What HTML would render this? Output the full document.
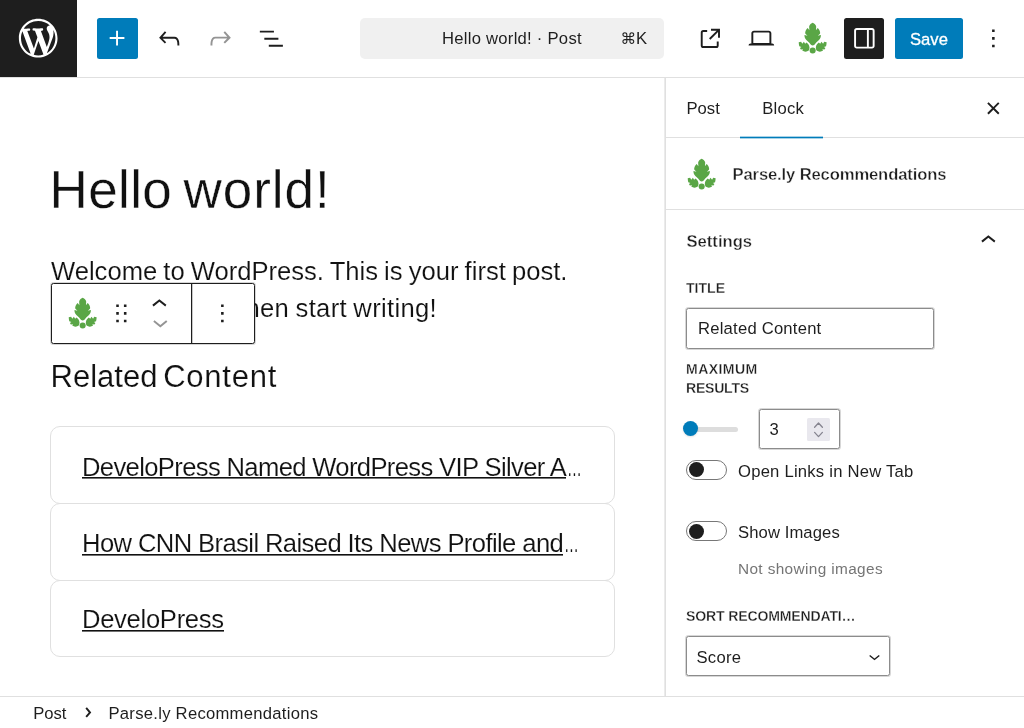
<!DOCTYPE html>
<html lang="en">
<head>
<meta charset="utf-8">
<title>Edit Post “Hello world!” ‹ WordPress</title>
<style>
*{box-sizing:border-box;margin:0;padding:0}
html,body{width:1024px;height:728px;overflow:hidden;background:#fff}
body{will-change:transform;font-family:"Liberation Sans",sans-serif;font-size:16.64px;color:#1e1e1e;position:relative}
.abs{position:absolute}
svg{display:block}
.ico{position:absolute;width:30.72px;height:30.72px;fill:#1e1e1e}
.leaf{width:38px;height:40px}
.t{position:absolute;white-space:nowrap;line-height:1}
/* header */
#hdr{left:0;top:0;width:1024px;height:78px;background:#fff;border-bottom:1px solid #e0e0e0}
#wp{left:0;top:0;width:77px;height:77px;background:#1e1e1e}
#ins{left:97px;top:18px;width:41px;height:41px;background:#007cba;border-radius:2.5px}
#doc{left:360px;top:18px;width:303.5px;height:41px;background:#f0f0f0;border-radius:5px}
#tog{left:843.7px;top:18px;width:40.6px;height:41px;background:#1e1e1e;border-radius:2.5px}
#save{left:895px;top:18px;width:67.5px;height:41px;background:#007cba;border-radius:2.5px}
/* canvas */
.c{font-family:"Liberation Sans",sans-serif;color:#111;-webkit-text-stroke:0.13px #fff}
#title{-webkit-text-stroke:0.35px #fff}
#h3{-webkit-text-stroke:0.15px #fff}
.el{display:inline-block;transform:scaleX(0.58);transform-origin:0 50%;margin-left:1px}
.c u{text-decoration:none;background:linear-gradient(#111,#111) 0 calc(100% - 2.5px)/100% 1.6px no-repeat}
#l2 u{background-position:0 calc(100% - 1.75px)}
#l3 u{background-position:0 calc(100% - 1.4px)}
/* sidebar */
#sb{left:664px;top:78px;width:360px;height:619px;background:linear-gradient(90deg,#ebebeb 0 1px,#e0e0e0 1px 2px,#fff 2px)}
.hl{position:absolute;height:1px;background:#e0e0e0}
.lab{font-size:14.08px;font-weight:bold;letter-spacing:0;color:#1e1e1e;-webkit-text-stroke:0.3px #fff}
.m{font-weight:bold;-webkit-text-stroke:0.35px #fff}
.inp{position:absolute;border:1px solid #8c8c8c;border-radius:2.5px;background:#fff;box-shadow:0 0 0 1px rgba(140,140,140,.35)}
.tg{position:absolute;width:41px;height:20.4px;border:1.1px solid #777;border-radius:10.2px;background:#fff}
.tg i{position:absolute;left:1.6px;top:1.6px;width:15px;height:15px;border-radius:50%;background:#1e1e1e}
/* footer */
#ft{left:0;top:696px;width:1024px;height:32px;background:#fff;border-top:1px solid #e0e0e0}
</style>
</head>
<body>

<!-- ============ HEADER ============ -->
<div id="hdr" class="abs"></div>
<div id="wp" class="abs">
  <svg class="ico" style="left:15.2px;top:15.4px;width:46.4px;height:46.4px;fill:#fff" viewBox="-2 -2 24 24"><path d="M20 10c0-5.51-4.49-10-10-10C4.48 0 0 4.49 0 10c0 5.52 4.48 10 10 10 5.51 0 10-4.48 10-10zM7.78 15.37L4.37 6.22c.55-.02 1.17-.08 1.17-.08.5-.06.44-1.13-.06-1.11 0 0-1.45.11-2.37.11-.18 0-.37 0-.58-.01C4.12 2.69 6.87 1.11 10 1.11c2.33 0 4.45.87 6.05 2.34-.68-.11-1.65.39-1.65 1.58 0 .74.45 1.36.9 2.1.35.61.55 1.36.55 2.46 0 1.49-1.4 5-1.4 5l-3.03-8.37c.54-.02.82-.17.82-.17.5-.05.44-1.25-.06-1.22 0 0-1.44.12-2.38.12-.87 0-2.33-.12-2.33-.12-.5-.03-.56 1.2-.06 1.22l.92.08 1.26 3.41zM17.41 10c.24-.64.74-1.87.43-4.25.7 1.29 1.05 2.71 1.05 4.25 0 3.29-1.73 6.24-4.4 7.78.97-2.59 1.94-5.2 2.92-7.78zM6.1 18.09C3.12 16.65 1.11 13.53 1.11 10c0-1.3.23-2.48.72-3.59C3.25 10.3 4.67 14.2 6.1 18.09zm4.03-6.63l2.58 6.98c-.86.29-1.76.45-2.71.45-.79 0-1.57-.11-2.29-.33.81-2.38 1.62-4.74 2.42-7.1z"/></svg>
</div>
<div id="ins" class="abs">
  <svg class="ico" style="left:5px;top:5px;fill:#fff" viewBox="0 0 24 24"><path d="M11 12.5V17.5H12.5V12.5H17.5V11H12.5V6H11V11H6V12.5H11Z"/></svg>
</div>
<svg class="ico" style="left:153.6px;top:23px" viewBox="0 0 24 24"><path d="M18.3 11.7c-.6-.6-1.4-.9-2.3-.9H6.7l2.9-3.3-1.1-1-4.5 5L8.5 16l1-1-2.7-2.7H16c.5 0 .9.2 1.3.5 1 1 1 3.4 1 4.5v.3h1.5v-.2c0-1.5 0-4.3-1.5-5.7z"/></svg>
<svg class="ico" style="left:204.8px;top:23px;fill:#949494" viewBox="0 0 24 24"><path d="M15.6 6.5l-1.1 1 2.9 3.3H8c-.9 0-1.7.3-2.3.9-1.4 1.5-1.4 4.2-1.4 5.6v.2h1.5v-.3c0-1.1 0-3.5 1-4.5.3-.3.7-.5 1.3-.5h9.2L14.5 15l1.1 1.1 4.6-4.6-4.6-5z"/></svg>
<svg class="ico" style="left:256px;top:23px" viewBox="0 0 24 24"><path d="M3 6h11v1.5H3V6Zm3.5 5.500h11V13h-11v-1.500ZM21 17H10v1.500h11V17Z"/></svg>

<div id="doc" class="abs"></div>
<div class="t" style="left:442px;top:31.1px;font-size:16.64px;letter-spacing:0.26px">Hello world! · Post</div>
<div class="t" style="left:620.5px;top:31.3px;font-size:16.64px"><span style="font-family:'DejaVu Sans',sans-serif;font-size:15.5px">⌘</span>K</div>

<svg class="ico" style="left:694.500px;top:23px" viewBox="0 0 24 24"><path d="M19.500 4.500h-7V6h4.440l-5.970 5.970 1.060 1.060L18 7.060v4.440h1.500v-7Zm-13 1a2 2 0 0 0-2 2v10a2 2 0 0 0 2 2h10a2 2 0 0 0 2-2v-3H17v3a.5.5 0 0 1-.5.5h-10a.5.5 0 0 1-.5-.5v-10a.5.5 0 0 1 .5-.5h3V5.500h-3Z"/></svg>
<svg class="ico" style="left:746px;top:23px" viewBox="0 0 24 24"><path d="M20.500 16h-.7V8c0-1.100-.9-2-2-2H6.200c-1.100 0-2 .9-2 2v8h-.7c-.8 0-1.500.7-1.500 1.500h20c0-.8-.7-1.500-1.500-1.500zM5.700 8c0-.3.200-.5.500-.5h11.600c.3 0 .5.200.5.500v7.600H5.700V8z"/></svg>
<svg class="leaf abs" style="left:794px;top:18px" viewBox="0 0 692 728"><g fill="#5aa646"><path d="M340,88C352,92 375,108 392,125C402,135 405,150 404,165L400,222L430,180C450,195 470,225 476,262C478,275 474,285 468,292L434,322L489,311C493,335 482,372 455,402L405,447L372,486Q340,512 308,486L275,447L225,402C198,372 187,335 191,311L246,322L212,292C206,285 202,275 204,262C210,225 230,195 250,180L280,222L276,165C275,150 278,135 288,125C305,108 328,92 340,88Z"/><path d="M86,440L130,432L150,468L180,432L203,470L228,446C258,466 278,498 282,532C284,560 276,585 262,598C240,615 200,618 168,602L150,592L165,570L125,572L108,545L135,530L96,512C90,490 86,465 86,440Z"/><path d="M594,440L550,432L530,468L500,432L477,470L452,446C422,466 402,498 398,532C396,560 404,585 418,598C440,615 480,618 512,602L530,592L515,570L555,572L572,545L545,530L584,512C590,490 594,465 594,440Z"/><circle cx="340" cy="590" r="55"/></g></svg>
<div id="tog" class="abs">
  <svg class="ico" style="left:5px;top:5px;fill:#fff" viewBox="0 0 24 24"><path fill-rule="evenodd" d="M18 4H6c-1.100 0-2 .9-2 2v12c0 1.100.9 2 2 2h12c1.100 0 2-.9 2-2V6c0-1.100-.9-2-2-2zm-4 14.500H6c-.3 0-.5-.2-.5-.5V6c0-.3.200-.5.500-.5h8v13zm4.500-.5c0 .3-.2.500-.5.500h-2.500v-13H18c.3 0 .5.200.5.500v12z"/></svg>
</div>
<div id="save" class="abs"></div>
<div class="t" style="left:910px;top:32px;font-size:16.64px;color:#fff;-webkit-text-stroke:0.3px #fff">Save</div>
<svg class="ico" style="left:977.500px;top:23px" viewBox="0 0 24 24"><path d="M13 19h-2v-2h2v2zm0-6h-2v-2h2v2zm0-6h-2V5h2v2z"/></svg>

<!-- ============ CANVAS ============ -->
<div class="t c" id="title" style="left:49.6px;top:163px;font-size:53px;letter-spacing:0.35px;word-spacing:-3.6px">Hello <span style="letter-spacing:0.95px">world!</span></div>
<div class="t c" id="p1" style="left:51px;top:258.7px;font-size:25.600px;word-spacing:-1px">Welcome to WordPress. This is your first post.</div>
<div class="t c" id="p2" style="left:51px;top:295.5px;font-size:25.600px;word-spacing:-1px;letter-spacing:0.32px">Edit or delete it, then start writing!</div>
<div class="t c" id="h3" style="left:50.6px;top:361.1px;font-size:31px;letter-spacing:0px;word-spacing:-2.9px">Related <span style="letter-spacing:0.75px">Content</span></div>

<div class="abs li" style="left:50px;top:426.3px;width:565.4px;height:77.7px;border:1px solid #e0e0e0;border-radius:10px"></div>
<div class="abs li" style="left:50px;top:503px;width:565.4px;height:77.7px;border:1px solid #e0e0e0;border-radius:10px"></div>
<div class="abs li" style="left:50px;top:579.7px;width:565.4px;height:77.7px;border:1px solid #e0e0e0;border-radius:10px"></div>
<div class="t c" id="l1" style="left:82px;top:455.2px;font-size:25.600px;letter-spacing:-0.64px"><u>DeveloPress Named WordPress VIP Silver A</u><span class="el">…</span></div>
<div class="t c" id="l2" style="left:82px;top:530.9px;font-size:25.600px;letter-spacing:-0.6px"><u>How CNN Brasil Raised Its News Profile and</u><span class="el">…</span></div>
<div class="t c" id="l3" style="left:82px;top:607.4px;font-size:25.600px;letter-spacing:-0.3px"><u>DeveloPress</u></div>

<!-- block toolbar -->
<div class="abs" style="left:51px;top:283px;width:204px;height:61px;background:#fff;border:1px solid #1e1e1e;border-radius:2.500px;box-shadow:0 0 0 1px rgba(30,30,30,.18)"></div>
<div class="abs" style="left:191px;top:283px;width:1px;height:61px;background:#1e1e1e;box-shadow:1px 0 0 rgba(30,30,30,.25)"></div>
<svg class="leaf abs" style="left:63.6px;top:293px" viewBox="0 0 692 728"><g fill="#5aa646"><path d="M340,88C352,92 375,108 392,125C402,135 405,150 404,165L400,222L430,180C450,195 470,225 476,262C478,275 474,285 468,292L434,322L489,311C493,335 482,372 455,402L405,447L372,486Q340,512 308,486L275,447L225,402C198,372 187,335 191,311L246,322L212,292C206,285 202,275 204,262C210,225 230,195 250,180L280,222L276,165C275,150 278,135 288,125C305,108 328,92 340,88Z"/><path d="M86,440L130,432L150,468L180,432L203,470L228,446C258,466 278,498 282,532C284,560 276,585 262,598C240,615 200,618 168,602L150,592L165,570L125,572L108,545L135,530L96,512C90,490 86,465 86,440Z"/><path d="M594,440L550,432L530,468L500,432L477,470L452,446C422,466 402,498 398,532C396,560 404,585 418,598C440,615 480,618 512,602L530,592L515,570L555,572L572,545L545,530L584,512C590,490 594,465 594,440Z"/><circle cx="340" cy="590" r="55"/></g></svg>
<svg class="ico" style="left:106px;top:298px" viewBox="0 0 24 24"><path d="M8 7h2V5H8v2zm0 6h2v-2H8v2zm0 6h2v-2H8v2zm6-14v2h2V5h-2zm0 8h2v-2h-2v2zm0 6h2v-2h-2v2z"/></svg>
<svg class="ico" style="left:144.400px;top:289px" viewBox="0 0 24 24"><path d="M6.500 12.400L12 8l5.500 4.400-.9 1.200L12 10l-4.500 3.600-1-1.200z"/></svg>
<svg class="ico" style="left:144.600px;top:307px;fill:#949494" viewBox="0 0 24 24"><path d="M17.500 11.600L12 16l-5.500-4.400.9-1.200L12 14l4.500-3.600 1 1.200z"/></svg>
<svg class="ico" style="left:207px;top:298px" viewBox="0 0 24 24"><path d="M13 19h-2v-2h2v2zm0-6h-2v-2h2v2zm0-6h-2V5h2v2z"/></svg>

<!-- ============ SIDEBAR ============ -->
<div id="sb" class="abs"></div>
<div class="t" style="left:686.5px;top:100.8px;font-size:16.64px">Post</div>
<div class="t" style="left:762.3px;top:100.8px;font-size:16.64px;letter-spacing:0.2px">Block</div>
<div class="hl" style="left:666px;top:137px;width:358px"></div>
<div class="abs" style="left:740px;top:136px;width:83px;height:3px;background:linear-gradient(rgba(0,124,186,.35) 0 1px,#007cba 1px 2px,rgba(0,124,186,.35) 2px 3px)"></div>
<svg class="ico" style="left:977.500px;top:93px" viewBox="0 0 24 24"><path d="M12 13.060l3.712 3.713 1.061-1.060L13.061 12l3.712-3.712-1.060-1.060L12 10.938 8.288 7.227l-1.061 1.060L10.939 12l-3.712 3.712 1.060 1.061L12 13.061z"/></svg>

<svg class="leaf abs" style="left:682.6px;top:153.5px" viewBox="0 0 692 728"><g fill="#5aa646"><path d="M340,88C352,92 375,108 392,125C402,135 405,150 404,165L400,222L430,180C450,195 470,225 476,262C478,275 474,285 468,292L434,322L489,311C493,335 482,372 455,402L405,447L372,486Q340,512 308,486L275,447L225,402C198,372 187,335 191,311L246,322L212,292C206,285 202,275 204,262C210,225 230,195 250,180L280,222L276,165C275,150 278,135 288,125C305,108 328,92 340,88Z"/><path d="M86,440L130,432L150,468L180,432L203,470L228,446C258,466 278,498 282,532C284,560 276,585 262,598C240,615 200,618 168,602L150,592L165,570L125,572L108,545L135,530L96,512C90,490 86,465 86,440Z"/><path d="M594,440L550,432L530,468L500,432L477,470L452,446C422,466 402,498 398,532C396,560 404,585 418,598C440,615 480,618 512,602L530,592L515,570L555,572L572,545L545,530L584,512C590,490 594,465 594,440Z"/><circle cx="340" cy="590" r="55"/></g></svg>
<div class="t m" style="left:732.5px;top:167.4px;font-size:16.64px;letter-spacing:-0.14px">Parse.ly Recommendations</div>
<div class="hl" style="left:666px;top:209px;width:358px"></div>

<div class="t m" style="left:686.5px;top:234px;font-size:16.64px">Settings</div>
<svg class="ico" style="left:972.500px;top:225.2px" viewBox="0 0 24 24"><path d="M6.500 12.400L12 8l5.500 4.400-.9 1.200L12 10l-4.500 3.600-1-1.200z"/></svg>

<div class="t lab" style="left:686px;top:281px">TITLE</div>
<div class="inp" style="left:686px;top:308px;width:248.4px;height:41px"></div>
<div class="t" style="left:698px;top:321.4px;font-size:16.64px;letter-spacing:0.22px">Related Content</div>

<div class="t lab" style="left:686px;top:362px;letter-spacing:0.4px">MAXIMUM</div>
<div class="t lab" style="left:686px;top:381px;letter-spacing:-0.25px">RESULTS</div>
<div class="abs" style="left:690px;top:427px;width:48px;height:5px;border-radius:2.500px;background:#ddd"></div>
<div class="abs" style="left:682.600px;top:420.800px;width:15.700px;height:15.700px;border-radius:50%;background:#007cba;box-shadow:0 1px 2px rgba(0,0,0,.12)"></div>
<div class="inp" style="left:759px;top:408.8px;width:81px;height:40px"></div>
<div class="t" style="left:769.500px;top:422.4px;font-size:16.64px">3</div>
<div class="abs" style="left:807px;top:417.8px;width:23px;height:23px;background:#e9e8ee;border-radius:1.5px"></div>
<svg class="abs" style="left:807px;top:417.8px;width:23px;height:23px;fill:none;stroke:#85848f;stroke-width:1.3;stroke-linecap:round;stroke-linejoin:round" viewBox="0 0 23 23"><path d="M7.600 9.200L11.500 5L15.400 9.200M7.600 14.400L11.500 18.600L15.400 14.400"/></svg>

<div class="tg" style="left:686.2px;top:459.8px"><i></i></div>
<div class="t" style="left:738px;top:463.6px;font-size:16.64px;letter-spacing:0.23px">Open Links in New Tab</div>
<div class="tg" style="left:686.2px;top:521px"><i></i></div>
<div class="t" style="left:738px;top:524.8px;font-size:16.64px;letter-spacing:0.1px">Show Images</div>
<div class="t" style="left:738px;top:560.7px;font-size:15.360px;letter-spacing:0.37px;color:#757575">Not showing images</div>

<div class="t lab" style="left:686px;top:608.6px;letter-spacing:-0.17px">SORT RECOMMENDATI…</div>
<div class="inp" style="left:686px;top:635.5px;width:204.4px;height:40.5px"></div>
<div class="t" style="left:696.500px;top:650.1px;font-size:16.64px;letter-spacing:0.25px">Score</div>
<svg class="ico" style="left:863px;top:645px;width:23px;height:23px" viewBox="0 0 24 24"><path d="M17.500 11.600L12 16l-5.500-4.400.9-1.200L12 14l4.500-3.600 1 1.200z"/></svg>

<!-- ============ FOOTER ============ -->
<div id="ft" class="abs"></div>
<div class="t" style="left:33.2px;top:706px;font-size:16.64px">Post</div>
<svg class="ico" style="left:73px;top:696.500px" viewBox="0 0 24 24"><path d="M10.862 8.040L14.280 12.029L10.862 16.017L9.723 15.040L12.305 12.029L9.723 9.017L10.862 8.040Z"/></svg>
<div class="t" style="left:108.5px;top:706px;font-size:16.64px;letter-spacing:0.27px">Parse.ly Recommendations</div>

</body>
</html>
